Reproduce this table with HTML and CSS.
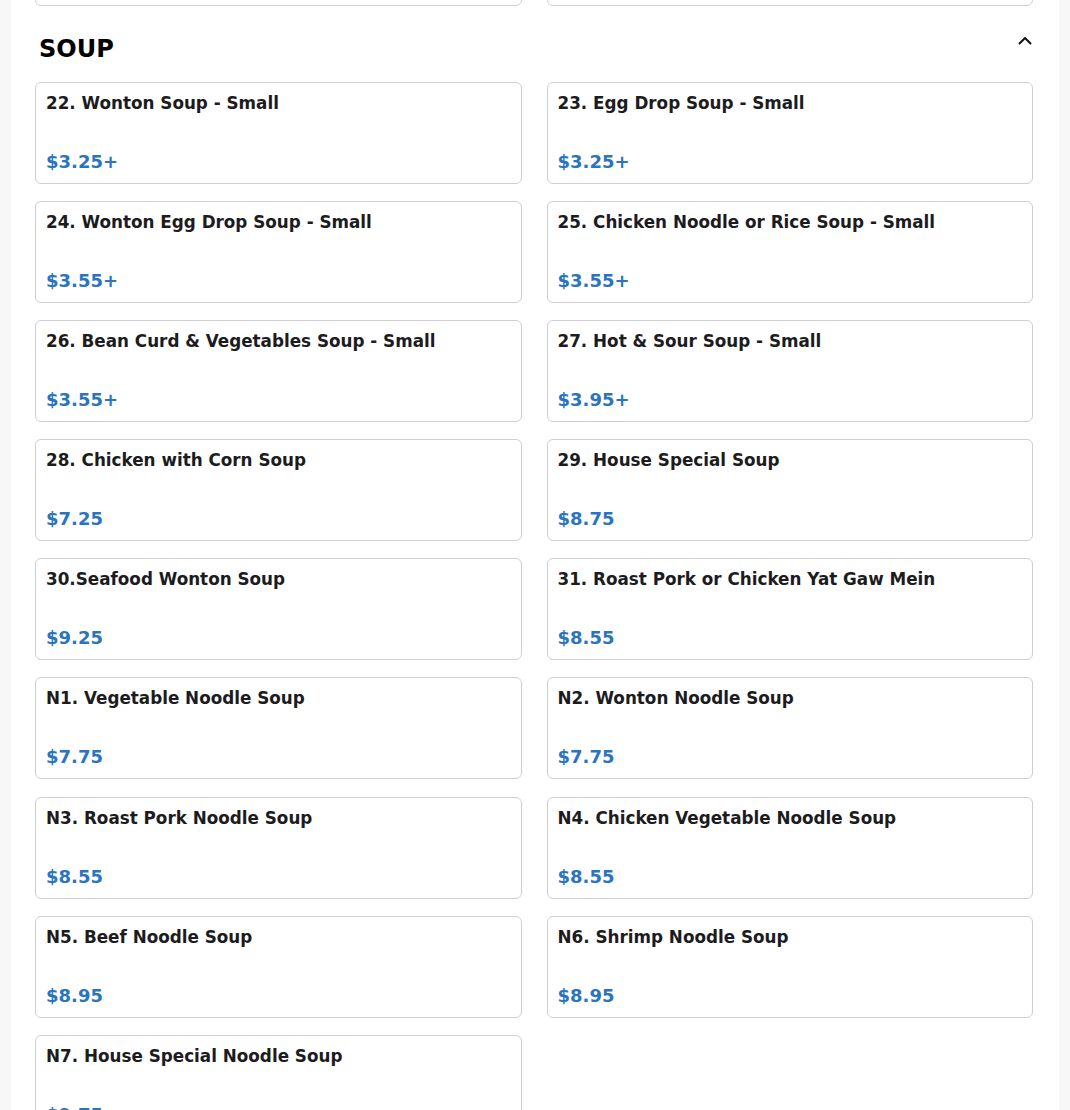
FILE: index.html
```html
<!DOCTYPE html>
<html lang="en">
<head>
<meta charset="utf-8">
<title>Menu - Soup</title>
<link rel="stylesheet" href="styles.css">
</head>
<body>
<main class="panel">
  <section class="section section-prev" aria-hidden="true">
    <div class="grid">
      <div class="card"><div class="title">&nbsp;</div><div class="price">&nbsp;</div></div>
      <div class="card"><div class="title">&nbsp;</div><div class="price">&nbsp;</div></div>
    </div>
  </section>
  <section class="section">
    <header class="section-head">
      <h2 class="section-title">SOUP</h2>
      <button class="toggle" aria-label="Collapse">
        <svg width="14" height="9" viewBox="0 0 14 9"><path d="M1.5 7.5 L7 2 L12.5 7.5" fill="none" stroke="#111" stroke-width="2" stroke-linecap="round" stroke-linejoin="round"/></svg>
      </button>
    </header>
    <div class="grid">
      <div class="card"><div class="title">22. Wonton Soup - Small</div><div class="price">$3.25+</div></div>
      <div class="card"><div class="title">23. Egg Drop Soup - Small</div><div class="price">$3.25+</div></div>
      <div class="card"><div class="title">24. Wonton Egg Drop Soup - Small</div><div class="price">$3.55+</div></div>
      <div class="card"><div class="title">25. Chicken Noodle or Rice Soup - Small</div><div class="price">$3.55+</div></div>
      <div class="card"><div class="title">26. Bean Curd &amp; Vegetables Soup - Small</div><div class="price">$3.55+</div></div>
      <div class="card"><div class="title">27. Hot &amp; Sour Soup - Small</div><div class="price">$3.95+</div></div>
      <div class="card"><div class="title">28. Chicken with Corn Soup</div><div class="price">$7.25</div></div>
      <div class="card"><div class="title">29. House Special Soup</div><div class="price">$8.75</div></div>
      <div class="card"><div class="title">30.Seafood Wonton Soup</div><div class="price">$9.25</div></div>
      <div class="card"><div class="title">31. Roast Pork or Chicken Yat Gaw Mein</div><div class="price">$8.55</div></div>
      <div class="card"><div class="title">N1. Vegetable Noodle Soup</div><div class="price">$7.75</div></div>
      <div class="card"><div class="title">N2. Wonton Noodle Soup</div><div class="price">$7.75</div></div>
      <div class="card"><div class="title">N3. Roast Pork Noodle Soup</div><div class="price">$8.55</div></div>
      <div class="card"><div class="title">N4. Chicken Vegetable Noodle Soup</div><div class="price">$8.55</div></div>
      <div class="card"><div class="title">N5. Beef Noodle Soup</div><div class="price">$8.95</div></div>
      <div class="card"><div class="title">N6. Shrimp Noodle Soup</div><div class="price">$8.95</div></div>
      <div class="card"><div class="title">N7. House Special Noodle Soup</div><div class="price">$9.75</div></div>
    </div>
  </section>
</main>
</body>
</html>
```
FILE: styles.css
```css
html, body {
  margin: 0;
  padding: 0;
}
body {
  background: #f7f7f8;
  font-family: "DejaVu Sans", "Liberation Sans", sans-serif;
  color: #1c1c20;
  overflow: hidden;
}
.panel {
  margin: 0 11px;
  background: #ffffff;
  padding: 0 26px 40px 24px;
}
.section-prev {
  margin-top: -96px;
}
.section-head {
  display: flex;
  align-items: flex-start;
  justify-content: space-between;
  padding: 29px 1px 0 4px;
  height: 76px;
  box-sizing: border-box;
}
.section-title {
  margin: 0;
  font-size: 24px;
  font-weight: bold;
  color: #000;
  line-height: 28px;
}
.toggle {
  background: none;
  border: 0;
  padding: 0;
  margin-top: 1px;
  width: 14px;
  height: 9px;
  display: flex;
  cursor: pointer;
}
.grid {
  display: grid;
  grid-template-columns: 1fr 1fr;
  column-gap: 25px;
  row-gap: 17.1px;
}
.card {
  border: 1px solid #cfcfd2;
  border-radius: 6px;
  padding: 10px;
  background: #fff;
}
.title {
  font-size: 16.8px;
  font-weight: bold;
  line-height: 20px;
  color: #1c1c20;
}
.price {
  margin-top: 37px;
  font-size: 18px;
  font-weight: bold;
  line-height: 23px;
  color: #2a74c0;
}
```
